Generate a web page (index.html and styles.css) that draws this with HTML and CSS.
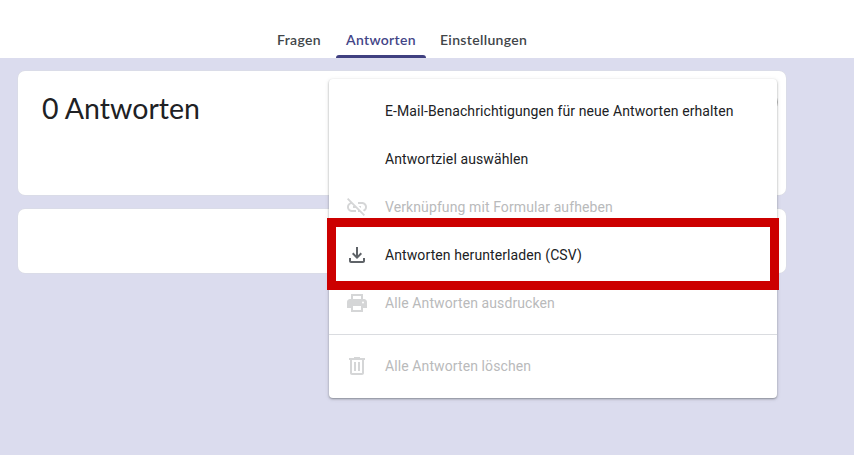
FILE: index.html
```html
<!DOCTYPE html>
<html lang="de">
<head>
<meta charset="utf-8">
<title>Antworten</title>
<link rel="stylesheet" href="styles.css">
</head>
<body>
<header class="topbar">
  <nav class="tabs">
    <a class="tab questions">Fragen</a>
    <a class="tab active">Antworten</a>
    <a class="tab settings">Einstellungen</a>
  </nav>
</header>
<main class="content">
  <section class="card summary">
    <h1 class="title">0 Antworten</h1>
    <span class="toggle"></span>
  </section>
  <section class="card accepting"></section>
</main>
<div class="menu">
  <div class="item"><span class="icon"></span><span>E-Mail-Benachrichtigungen für neue Antworten erhalten</span></div>
  <div class="item"><span class="icon"></span><span>Antwortziel auswählen</span></div>
  <div class="item disabled">
    <svg class="icon" viewBox="0 0 24 24"><path d="M17 7h-4v1.9h4c1.71 0 3.1 1.39 3.1 3.1 0 1.43-.98 2.63-2.31 2.98l1.46 1.46C20.88 15.61 22 13.95 22 12c0-2.76-2.24-5-5-5zm-1 4h-2.19l2 2H16v-2zM2 4.27l3.11 3.11C3.29 8.12 2 9.91 2 12c0 2.76 2.24 5 5 5h4v-1.9H7c-1.71 0-3.1-1.39-3.1-3.1 0-1.59 1.21-2.9 2.76-3.07L8.73 11H8v2h2.73L13 15.27V17h1.73l4.01 4L20 19.74 3.27 3 2 4.27z"/></svg>
    <span>Verknüpfung mit Formular aufheben</span>
  </div>
  <div class="item">
    <svg class="icon" viewBox="0 0 24 24"><path d="M18 15v3H6v-3H4v3c0 1.1.9 2 2 2h12c1.1 0 2-.9 2-2v-3h-2zm-1-4l-1.41-1.41L13 12.17V4h-2v8.17L8.41 9.59 7 11l5 5 5-5z"/></svg>
    <span>Antworten herunterladen (CSV)</span>
    <span class="highlight"></span>
  </div>
  <div class="item disabled">
    <svg class="icon" viewBox="0 0 24 24"><path fill-rule="evenodd" d="M19 8h-1V3H6v5H5c-1.66 0-3 1.34-3 3v6h4v4h12v-4h4v-6c0-1.66-1.34-3-3-3zM8 5h8v3H8V5zm8 14H8v-4h8v4zm2-6.5a1 1 0 1 1 0-2 1 1 0 0 1 0 2z"/></svg>
    <span>Alle Antworten ausdrucken</span>
  </div>
  <hr class="divider">
  <div class="item disabled">
    <svg class="icon" viewBox="0 0 24 24"><path fill-rule="evenodd" d="M15 4V3H9v1H4v2h1v13c0 1.1.9 2 2 2h10c1.1 0 2-.9 2-2V6h1V4h-5zm2 15H7V6h10v13zM9 8h2v9H9V8zm4 0h2v9h-2V8z"/></svg>
    <span>Alle Antworten löschen</span>
  </div>
</div>
</body>
</html>
```
FILE: styles.css
```css
* { box-sizing: border-box; }
body {
  margin: 0;
  height: 455px;
  overflow: hidden;
  background: #dbdcee;
  font-family: Roboto, sans-serif;
  color: #202124;
}
.topbar {
  height: 58px;
  background: #fff;
  display: flex;
  align-items: flex-end;
  padding-left: 267px;
}
.tabs { display: flex; gap: 4px; }
.tab {
  height: 36px;
  padding: 0 10px;
  font: 600 14px/36px Lato, sans-serif;
  letter-spacing: .33px;
  color: #414549;
  white-space: nowrap;
}
.questions { width: 65px; }
.active {
  position: relative;
  width: 90px;
  color: #434587;
}
.active::after {
  content: "";
  position: absolute;
  left: 0;
  right: 0;
  bottom: 0;
  height: 3px;
  border-radius: 3px 3px 0 0;
  background: #404080;
}
.content {
  width: 768px;
  margin: 13px 0 0 18px;
  display: flex;
  flex-direction: column;
  gap: 14px;
}
.card {
  background: #fff;
  border-radius: 7px;
  box-shadow: 0 0 0 .5px #d9dbe1;
}
.summary {
  height: 124px;
  padding: 21px 8px 0 24px;
  display: flex;
  justify-content: space-between;
}
.accepting { height: 64px; }
.title {
  margin: 0;
  font: 400 28.5px/33px Lato, sans-serif;
}
.toggle {
  width: 20px;
  height: 20px;
  border-radius: 50%;
  background: #bbb;
}
.menu {
  position: absolute;
  left: 329px;
  top: 79px;
  width: 448px;
  padding: 8px 0;
  background: #fff;
  border-radius: 4px;
  box-shadow: 0 1px 2px rgba(60, 64, 67, .45), 0 1px 4px rgba(60, 64, 67, .15);
}
.item {
  position: relative;
  height: 48px;
  padding: 0 16px;
  display: flex;
  align-items: center;
  gap: 16px;
  font-size: 14px;
  letter-spacing: .1px;
  white-space: nowrap;
}
.icon { width: 24px; height: 24px; flex: none; fill: #5f6368; }
.disabled { color: #b9babb; }
.disabled .icon { fill: #d5d6d7; }
.divider { height: 1px; margin: 7px 0; border: 0; background: #dadce0; }
.highlight {
  position: absolute;
  z-index: 1;
  left: -2px;
  top: -13px;
  width: 452px;
  height: 72px;
  border: 9px solid #c00;
}
```
